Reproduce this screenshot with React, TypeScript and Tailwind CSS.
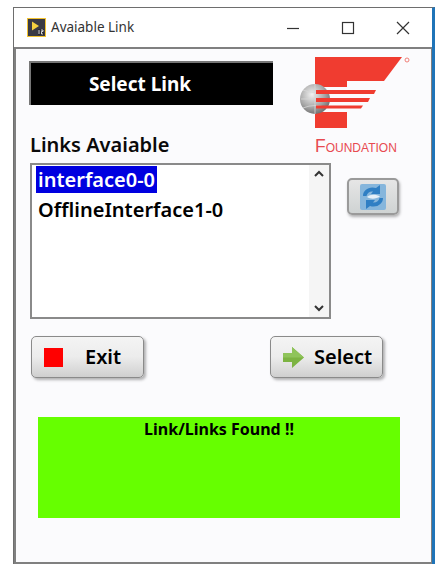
const font = "font-['Noto_Sans','Open_Sans',sans-serif]";

function AppIcon() {
  return (
    <svg width="19" height="19" viewBox="0 0 19 19">
      <rect x="0.5" y="0.5" width="18" height="18" fill="#3a3a44" stroke="#f2c230" />
      <path d="M5 3.5 L12 8 L5 12.5 Z" fill="#f5d040" />
      <rect x="11" y="11" width="6" height="6" fill="#2b2b33" />
      <path d="M12 12v4M14 12h2v1.5h-1.5V16H16" stroke="#e8e8e8" strokeWidth="0.9" fill="none" />
    </svg>
  );
}

function WindowControls() {
  return (
    <div className="flex items-center">
      <svg width="14" height="14" viewBox="0 0 14 14" className="mr-[41px]">
        <path d="M1 7.5H13" stroke="#333" strokeWidth="1.2" />
      </svg>
      <svg width="14" height="14" viewBox="0 0 14 14" className="mr-[41px]">
        <rect x="1.5" y="1.5" width="11" height="11" fill="none" stroke="#333" strokeWidth="1.2" />
      </svg>
      <svg width="14" height="14" viewBox="0 0 14 14">
        <path d="M1 1L13 13M13 1L1 13" stroke="#333" strokeWidth="1.2" />
      </svg>
    </div>
  );
}

function Logo() {
  return (
    <svg width="113" height="76" viewBox="0 0 113 76">
      <defs>
        <radialGradient id="globe" cx="40%" cy="35%" r="70%">
          <stop offset="0%" stopColor="#f2f2f2" />
          <stop offset="60%" stopColor="#a8a8a8" />
          <stop offset="100%" stopColor="#6a6a6a" />
        </radialGradient>
      </defs>
      <path d="M15 0H102L84 24H47V30H15Z" fill="#f03c30" />
      <path d="M15 55H47V71H15Z" fill="#f03c30" />
      <circle cx="15" cy="42" r="15" fill="url(#globe)" />
      <path d="M3 33Q15 38 27 33M1 42H29M3 51Q15 46 27 51M15 27V57" stroke="#d8d8d8" strokeWidth="0.8" fill="none" />
      <path d="M16 33H76L74 37H16Z" fill="#f03c30" />
      <path d="M16 41H70L68 45H16Z" fill="#f03c30" />
      <path d="M16 48.500H63L61 51.500H16Z" fill="#f03c30" />
      <circle cx="107" cy="3" r="2" fill="none" stroke="#f08078" strokeWidth="1" />
    </svg>
  );
}

function RefreshIcon() {
  return (
    <svg width="28" height="30" viewBox="0 0 28 30">
      <rect x="1" y="2" width="26" height="26" rx="2" fill="#86b6dc" />
      <path d="M4 14C4 8 10 4 17 6L21 3V12H12L14 9.500C11 9 8 11 7.500 14Z" fill="#2f7fc4" />
      <path d="M24 16C24 22 18 26 11 24L7 27V18H16L14 20.500C17 21 20 19 20.500 16Z" fill="#2f7fc4" />
      <path d="M8 15C11 12 17 12 21 14.500C17 17 12 17.500 8 15Z" fill="#e6f0f8" />
    </svg>
  );
}

function ArrowIcon() {
  return (
    <svg width="23" height="23" viewBox="0 0 23 23">
      <path d="M1 7H10V1L22 11.500L10 22V16H1Z" fill="#7cb342" />
      <path d="M1 7H10V1L22 11.500H1Z" fill="#8fc45a" />
    </svg>
  );
}

const buttonClass =
  "flex h-[42px] items-center rounded-[5px] border border-[#8a8a8a] bg-gradient-to-b from-[#f4f4f4] via-[#ececec] to-[#cfcfcf] shadow-[2px_2px_3px_rgba(0,0,0,0.3)]";

export default function App() {
  return (
    <div className={`h-[569px] w-[447px] overflow-hidden bg-white pl-[13px] pt-[7px] ${font}`}>
      <div className="flex h-[557px] w-[422px] flex-col border-l border-r-[3px] border-t border-[#6e6e6e] border-r-[#1f74b8]">
        <div className="flex h-[39px] shrink-0 items-center justify-between bg-white pl-[13px] pr-[22px]">
          <div className="flex items-center gap-[5px]">
            <AppIcon />
            <span className="text-[13.5px] text-[#333]">Avaiable Link</span>
          </div>
          <WindowControls />
        </div>

        <div className="flex flex-1 flex-col border-2 border-r-[1px] border-[#808080] bg-[#fbfbfd] pl-[13px] pr-[18px] pt-[12px]">
          <div className="flex justify-between">
            <div>
              <div className="flex h-[44px] w-[244px] items-center justify-center border-l-2 border-t-2 border-[#777] bg-black pr-[24px] text-[19px] font-bold text-white">
                Select Link
              </div>
              <div className="ml-[1px] mt-[26px] text-[20px] font-semibold leading-[28px] text-[#0a0a0a]">
                Links Avaiable
              </div>
            </div>
            <div className="-mt-[4px] flex flex-col">
              <Logo />
              <div className="ml-[15px] mt-[4px] font-['Liberation_Sans',sans-serif] text-[17.5px] leading-[18px] text-[#e84a50] [font-variant:small-caps]">
                Foundation
              </div>
            </div>
          </div>

          <div className="ml-[1px] mt-[4px] flex items-start">
            <div className="flex h-[156px] w-[301px] border-2 border-[#8a8a8a] bg-white">
              <div className="flex-1 pl-[4px] text-[20px] font-semibold leading-[30px] text-black">
                <div>
                  <span className="bg-[#0000e0] px-[2px] text-white">interface0-0</span>
                </div>
                <div className="pl-[2px]">OfflineInterface1-0</div>
              </div>
              <div className="flex w-[20px] flex-col items-center justify-between bg-[#f5f5f5] py-[5px] text-[#333]">
                <svg width="12" height="8" viewBox="0 0 12 8">
                  <path d="M2 6L6 2L10 6" fill="none" stroke="#333" strokeWidth="2" />
                </svg>
                <svg width="12" height="8" viewBox="0 0 12 8">
                  <path d="M2 2L6 6L10 2" fill="none" stroke="#333" strokeWidth="2" />
                </svg>
              </div>
            </div>
            <div className="ml-[16px] mt-[15px] flex h-[37px] w-[52px] items-center justify-center rounded-[5px] border-2 border-[#9a9a9a] bg-gradient-to-b from-[#e6e6e6] to-[#cfd3d3] shadow-[1px_2px_3px_rgba(0,0,0,0.3)]">
              <RefreshIcon />
            </div>
          </div>

          <div className="ml-[2px] mt-[17px] flex w-[352px] justify-between">
            <div className={`${buttonClass} w-[113px] pl-[12px] text-[20px] font-semibold text-black`}>
              <div className="h-[19px] w-[19px] bg-[#ff0000]" />
              <span className="ml-[22px]">Exit</span>
            </div>
            <div className={`${buttonClass} ml-[1px] w-[113px] pl-[11px] text-[20px] font-semibold text-black`}>
              <ArrowIcon />
              <span className="ml-[9px]">Select</span>
            </div>
          </div>

          <div className="ml-[9px] mt-[39px] h-[101px] w-[362px] bg-[#66ff00] pt-[1px] text-center text-[16px] font-bold leading-[22px] text-black [font-variant-ligatures:none]">
            Link/Links Found !!
          </div>
        </div>
      </div>
    </div>
  );
}
